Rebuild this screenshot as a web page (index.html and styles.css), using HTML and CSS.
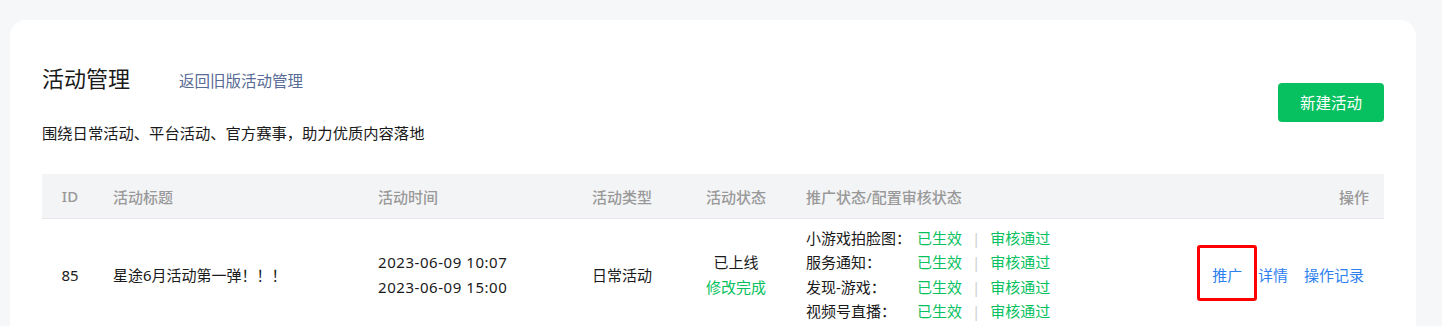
FILE: index.html
```html
<!DOCTYPE html>
<html>
<head>
  <meta charset="utf-8">
  <link rel="stylesheet" href="styles.css">
</head>
<body>
  <div class="card">
    <div class="page-head">
      <div class="head-main">
        <div class="title-row">
          <h1>活动管理</h1>
          <a href="#" class="old-link">返回旧版活动管理</a>
        </div>
        <p class="desc">围绕日常活动、平台活动、官方赛事，助力优质内容落地</p>
      </div>
      <button class="btn-primary">新建活动</button>
    </div>

    <table class="act-table">
      <thead>
        <tr>
          <th class="col-id">ID</th>
          <th class="col-title">活动标题</th>
          <th class="col-time">活动时间</th>
          <th class="col-type">活动类型</th>
          <th class="col-status">活动状态</th>
          <th class="col-promo">推广状态/配置审核状态</th>
          <th class="col-ops">操作</th>
        </tr>
      </thead>
      <tbody>
        <tr>
          <td class="col-id">85</td>
          <td class="col-title">星途6月活动第一弹！！！</td>
          <td class="col-time">
            <div>2023-06-09 10:07</div>
            <div>2023-06-09 15:00</div>
          </td>
          <td class="col-type">日常活动</td>
          <td class="col-status">
            <div>已上线</div>
            <div class="text-green">修改完成</div>
          </td>
          <td class="col-promo">
            <div class="promo-line"><span class="promo-label">小游戏拍脸图：</span><span class="text-green">已生效</span><span class="sep">|</span><span class="text-green">审核通过</span></div>
            <div class="promo-line"><span class="promo-label">服务通知：</span><span class="text-green">已生效</span><span class="sep">|</span><span class="text-green">审核通过</span></div>
            <div class="promo-line"><span class="promo-label">发现-游戏：</span><span class="text-green">已生效</span><span class="sep">|</span><span class="text-green">审核通过</span></div>
            <div class="promo-line"><span class="promo-label">视频号直播：</span><span class="text-green">已生效</span><span class="sep">|</span><span class="text-green">审核通过</span></div>
          </td>
          <td class="col-ops">
            <a href="#" class="op-link marked">推广</a>
            <a href="#" class="op-link">详情</a>
            <a href="#" class="op-link">操作记录</a>
          </td>
        </tr>
      </tbody>
    </table>
  </div>
</body>
</html>
```

FILE: styles.css
```css
body {
  margin: 0;
  padding: 20px 26px 0 10px;
  background: #f6f7f9;
  font-family: "Noto Sans", "Noto Sans CJK SC", sans-serif;
  color: #1a1a1a;
}

.card {
  background: #fff;
  border-radius: 16px;
  padding: 44px 32px 40px;
}

.page-head {
  display: flex;
  align-items: center;
  justify-content: space-between;
}

.title-row {
  display: flex;
  align-items: baseline;
  height: 28px;
}

.title-row h1 {
  margin: 0;
  font-size: 22px;
  font-weight: normal;
  line-height: 28px;
}

.old-link {
  margin-left: 49px;
  font-size: 15.5px;
  color: #576b95;
  text-decoration: none;
}

.desc {
  margin: 30px 0 0;
  font-size: 15.3px;
  line-height: 22px;
}

.btn-primary {
  width: 106px;
  height: 39px;
  border: none;
  border-radius: 4px;
  background: #07c160;
  color: #fff;
  font-family: inherit;
  font-size: 15.5px;
  cursor: pointer;
  margin-top: -3px;
}

.act-table {
  width: 100%;
  margin-top: 30px;
  border-collapse: collapse;
  table-layout: fixed;
  font-size: 15px;
}

.act-table th {
  height: 44px;
  padding: 0 15px;
  background: #f3f4f6;
  border-bottom: 1px solid #e6e7ea;
  color: #999;
  font-weight: 500;
  text-align: left;
}

.act-table td {
  padding: 7px 15px;
  vertical-align: middle;
  line-height: 24.4px;
}

.act-table .col-id { width: 56px; padding: 0; text-align: center; }
.act-table .col-title { width: 235px; }
.act-table .col-time { width: 170px; }
.act-table .col-type { width: 88px; text-align: center; }
.act-table .col-status { width: 80px; text-align: center; }
.act-table .col-promo { width: 330px; }
.act-table .col-ops { text-align: right; }

.act-table td.col-time { letter-spacing: 0.55px; }
.act-table td.col-ops { padding-right: 20px; }

.text-green {
  color: #07c160;
}

.promo-label {
  display: inline-block;
  width: 111px;
}

.sep {
  color: #cfcfcf;
  margin: 0 10px;
}

.op-link {
  color: #2d7ff0;
  text-decoration: none;
  margin-left: 12px;
}

.marked {
  position: relative;
}

.marked::after {
  content: "";
  position: absolute;
  left: -15px;
  top: -20px;
  width: 54px;
  height: 50px;
  border: 3px solid #ff0000;
  border-radius: 3px;
}
```
